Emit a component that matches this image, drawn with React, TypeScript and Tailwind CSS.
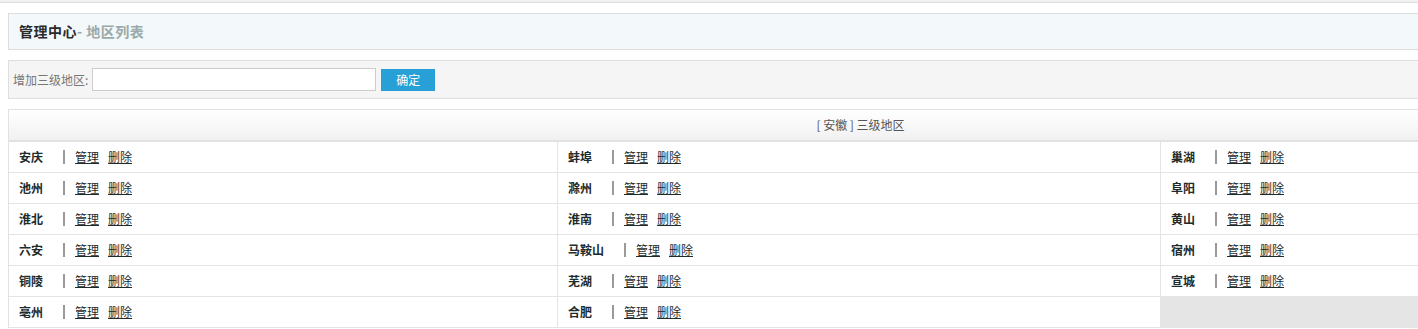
import React from "react";

const rows: (string | null)[][] = [
  ["安庆", "蚌埠", "巢湖"],
  ["池州", "滁州", "阜阳"],
  ["淮北", "淮南", "黄山"],
  ["六安", "马鞍山", "宿州"],
  ["铜陵", "芜湖", "宣城"],
  ["亳州", "合肥", null],
];

const colWidths = ["w-[548px]", "w-[603px]", "w-[552px]"];

function AreaCell({ name, width, first }: { name: string | null; width: string; first: boolean }) {
  if (!name) {
    return <div className={`${width} shrink-0 bg-[#e5e5e5] ${first ? "" : "border-l border-[#e4e4e4]"}`} />;
  }
  return (
    <div className={`${width} shrink-0 flex items-center pl-[10px] ${first ? "" : "border-l border-[#e4e4e4]"}`}>
      <span className="font-bold text-[#1e2b2b] mr-[20px]">{name}</span>
      <span className="w-[2px] h-[14px] bg-[#9a9a9a]" />
      <a href="#" className="ml-[10px] underline decoration-[#1e2b2b] text-[#1e2b2b]">管理</a>
      <a href="#" className="ml-[9px] underline decoration-[#1e2b2b] text-[#1e2b2b]">删除</a>
    </div>
  );
}

export default function App() {
  return (
    <div className="w-[1418px] h-[329px] overflow-hidden bg-white font-['Microsoft_YaHei','Noto_Sans_CJK_SC',sans-serif] text-[12px]">
      <div className="h-[3px] bg-[#f2f2f2] border-b border-[#dcdcdc]" />

      <div className="ml-2 mt-[10px] w-[1704px] h-[37px] border border-[#dedede] bg-[#f3f8fb] flex items-center pl-[10px]">
        <h2 className="text-[14px] tracking-[0.5px] font-bold text-[#2a2a2a]">
          管理中心<span className="text-[#9aa9a9]">- 地区列表</span>
        </h2>
      </div>

      <div className="ml-2 mt-[10px] w-[1704px] h-[39px] border border-[#dedede] bg-[#f5f5f5] flex items-center pl-[4px]">
        <label className="text-[#777]">增加三级地区:</label>
        <input type="text" className="ml-[4px] w-[284px] h-[23px] border border-[#cccccc] bg-white outline-none" />
        <button className="ml-[5px] w-[54px] h-[22px] bg-[#26a0d6] text-white text-[12px]">确定</button>
      </div>

      <div className="ml-2 mt-[10px] w-[1704px] border-t border-l border-[#e2e2e2]">
        <div className="h-[32px] flex items-center justify-center bg-gradient-to-b from-white to-[#f1f1f1] border-b-2 border-[#e2e2e2] text-[#555]">
          [ 安徽 ] 三级地区
        </div>
        {rows.map((row, i) => (
          <div key={i} className="flex h-[31px] border-b border-[#e4e4e4]">
            {row.map((name, j) => (
              <AreaCell key={j} name={name} width={colWidths[j]} first={j === 0} />
            ))}
          </div>
        ))}
      </div>
    </div>
  );
}
